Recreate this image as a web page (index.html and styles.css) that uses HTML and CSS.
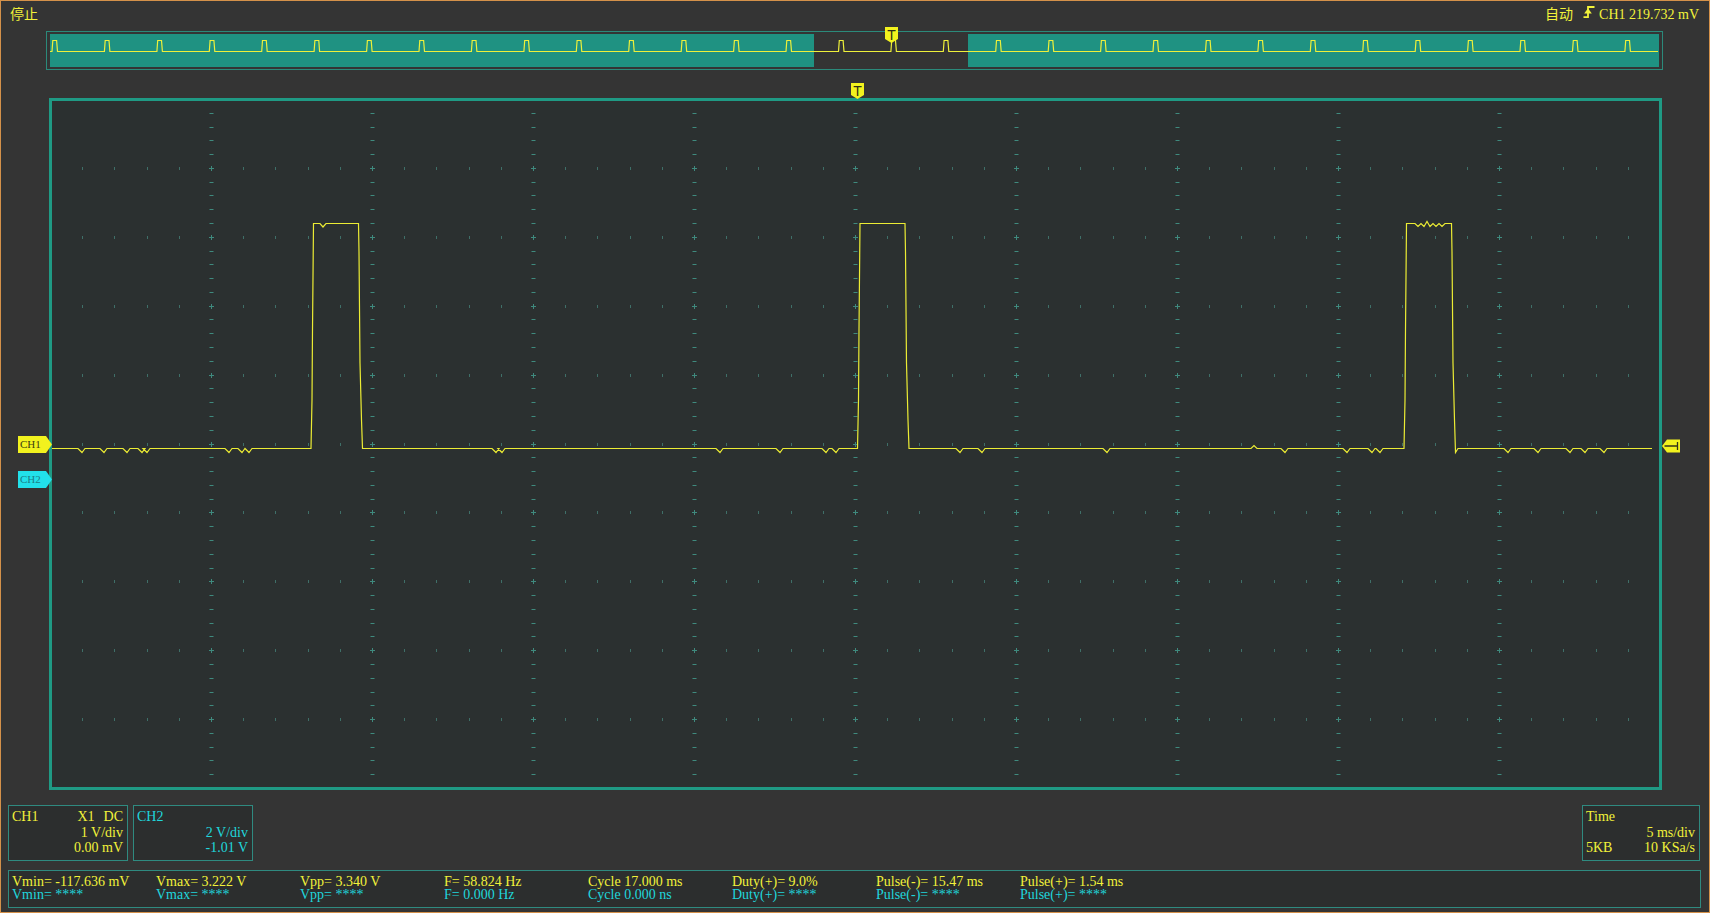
FILE: index.html
```html
<!DOCTYPE html>
<html lang="zh">
<head>
<meta charset="utf-8">
<title>Scope</title>
<link rel="stylesheet" href="styles.css">
</head>
<body>
<div class="screen">
  <header class="topbar">
    <span class="state">停止</span>
    <div class="trig">
      <span class="mode">自动</span>
      <svg class="edge" width="12" height="12" viewBox="0 0 12 12"><path d="M0.5 11.2H5V1H11.5" fill="none" stroke="#f2f23a" stroke-width="1.8"/><path d="M1.2 7.5L5 2.2L8.8 7.5Z" fill="#f2f23a"/></svg>
      <span class="trig-val">CH1 219.732 mV</span>
    </div>
  </header>

  <div class="overview">
    <div class="ov-inner">
      <svg class="ov-svg" width="1609" height="33" viewBox="50 34 1609 33">
        <rect x="814" y="34" width="154" height="33" fill="#343434"/>
        <path id="ov-trace" d="" fill="none" stroke="#eef03a" stroke-width="1.2"/>
      </svg>
    </div>
  </div>

  <div class="graticule">
    <svg class="scope-svg" width="1607" height="686" viewBox="52 101 1607 686">
      <path id="grid-h" d="" fill="none" stroke="#3f6f68" stroke-width="1"/>
      <path id="grid-v" d="" fill="none" stroke="#3f8a7e" stroke-width="1"/>
      <path id="trace" d="" fill="none" stroke="#ecec34" stroke-width="1.2" stroke-linejoin="miter"/>
    </svg>
  </div>

  <div class="chanrow">
    <div class="box ch1">
      <div class="row"><span>CH1</span><span class="cpl"><span>X1</span><span>DC</span></span></div>
      <div class="row end"><span>1 V/div</span></div>
      <div class="row end"><span>0.00 mV</span></div>
    </div>
    <div class="box ch2">
      <div class="row"><span>CH2</span></div>
      <div class="row end"><span>2 V/div</span></div>
      <div class="row end"><span>-1.01 V</span></div>
    </div>
    <div class="box time">
      <div class="row"><span>Time</span></div>
      <div class="row end"><span>5 ms/div</span></div>
      <div class="row"><span>5KB</span><span>10 KSa/s</span></div>
    </div>
  </div>

  <div class="measure">
    <div class="cell"><span class="y">Vmin= -117.636 mV</span><span class="c">Vmin= ****</span></div>
    <div class="cell"><span class="y">Vmax= 3.222 V</span><span class="c">Vmax= ****</span></div>
    <div class="cell"><span class="y">Vpp= 3.340 V</span><span class="c">Vpp= ****</span></div>
    <div class="cell"><span class="y">F= 58.824 Hz</span><span class="c">F= 0.000 Hz</span></div>
    <div class="cell"><span class="y">Cycle 17.000 ms</span><span class="c">Cycle 0.000 ns</span></div>
    <div class="cell"><span class="y">Duty(+)= 9.0%</span><span class="c">Duty(+)= ****</span></div>
    <div class="cell"><span class="y">Pulse(-)= 15.47 ms</span><span class="c">Pulse(-)= ****</span></div>
    <div class="cell"><span class="y">Pulse(+)= 1.54 ms</span><span class="c">Pulse(+)= ****</span></div>
  </div>

  <div class="tmark ov-t">T</div>
  <div class="tmark main-t">T</div>
  <div class="ch-marker ch1m">CH1</div>
  <div class="ch-marker ch2m">CH2</div>
  <svg class="lvl-marker" width="18" height="14" viewBox="0 0 18 14"><path d="M0 7L5 0.5H18V13.5H5Z" fill="#f2f21e"/><path d="M2.5 7H15.5M15.5 3V11" stroke="#33331a" stroke-width="1.3" fill="none"/></svg>
</div>
<script src="script.js"></script>
</body>
</html>
```
FILE: styles.css
```css
* { box-sizing: border-box; margin: 0; padding: 0; }
html, body { margin: 0; background: #343434; }
body { width: 1710px; height: 913px; overflow: hidden; }

.screen {
  position: relative;
  width: 1710px;
  height: 913px;
  border: 1px solid #d4914a;
  background: #343434;
  font-family: "Liberation Serif", "Times New Roman", serif;
  font-size: 14px;
  color: #f2f23a;
  display: flex;
  flex-direction: column;
  align-items: flex-start;
}
.screen > * { flex-shrink: 0; }

.topbar {
  width: 100%;
  height: 28px;
  display: flex;
  justify-content: space-between;
  align-items: baseline;
  padding: 2px 10px 0 9px;
  line-height: 20px;
}
.state, .mode { font-family: "Noto Sans CJK SC", sans-serif; font-size: 14px; }
.trig { display: flex; align-items: baseline; }
.edge { display: inline-block; margin: 0 4px 0 10px; position: relative; top: -1px; }

.overview {
  margin: 2px 0 0 45px;
  width: 1617px;
  height: 39px;
  border: 1px solid #2b8a7b;
  padding: 2px 3px;
}
.ov-inner { width: 100%; height: 100%; background: #1f9282; }
.ov-svg { display: block; }

.graticule {
  margin: 28px 0 0 48px;
  width: 1613px;
  height: 692px;
  border: 3px solid #1f9a84;
  background: #2b3030;
}
.scope-svg { display: block; }

.chanrow {
  width: 100%;
  height: 56px;
  margin-top: 15px;
  display: flex;
  gap: 5px;
  padding: 0 9px 0 7px;
}
.box {
  width: 120px;
  height: 56px;
  border: 1px solid #2f8a80;
  background: #2c2e2e;
  padding: 3px 4px 0 3px;
  line-height: 15.5px;
}
.box .row { display: flex; justify-content: space-between; white-space: nowrap; }
.box .row.end { justify-content: flex-end; }
.cpl { display: flex; gap: 9px; }
.ch2 { color: #20d6dc; }
.time { width: 118px; margin-left: auto; }

.measure {
  margin: 9px 0 0 7px;
  width: 1693px;
  height: 38px;
  border: 1px solid #2f8a80;
  background: #2c2e2e;
  padding: 4px 0 0 3px;
  display: grid;
  grid-template-columns: repeat(8, 144px);
  line-height: 13px;
}
.cell { display: flex; flex-direction: column; white-space: nowrap; }
.cell .c { color: #20d6dc; }

.tmark {
  position: absolute;
  width: 13px;
  height: 16px;
  background: #f2f21e;
  clip-path: polygon(0 0, 100% 0, 100% 75%, 50% 100%, 0 75%);
  font-family: "Liberation Sans", Arial, sans-serif;
  font-size: 14px;
  line-height: 16px;
  text-align: center;
  color: #2e2e14;
}
.ov-t { left: 884px; top: 26px; }
.main-t { left: 850px; top: 82px; }

.ch-marker {
  position: absolute;
  left: 17px;
  width: 34px;
  height: 17px;
  font-size: 11px;
  line-height: 17px;
  padding-left: 2px;
  clip-path: polygon(0 0, 28px 0, 34px 50%, 28px 100%, 0 100%);
}
.ch1m { top: 435px; background: #f2f21e; color: #3c3c12; }
.ch2m { top: 470px; background: #22e0ea; color: #1a7f88; }

.lvl-marker { position: absolute; left: 1661px; top: 438px; display: block; }
```
FILE: script.js
```js
(function () {
  // Overview trace
  var p = 'M50 51.5';
  for (var k = 0; k < 31; k++) {
    var x = 52 + 52.43 * k;
    p += ' L' + x.toFixed(1) + ' 51.5 L' + (x + 0.8).toFixed(1) + ' 40.5 L' + (x + 4.6).toFixed(1) + ' 40.5 L' + (x + 5.5).toFixed(1) + ' 51.5';
  }
  p += ' L1658 51.5';
  document.getElementById('ov-trace').setAttribute('d', p);

  // Graticule ticks
  var g = '';
  for (var kv = 1; kv <= 9; kv++) {
    var gx = 50.5 + 161 * kv;
    for (var j = 1; j < 50; j++) {
      var gy = Math.floor(99.5 + 13.78 * j) + 0.5;
      if (j % 5 === 0) {
        g += 'M' + (gx - 2.5) + ' ' + gy + 'h5M' + gx + ' ' + (gy - 2.5) + 'v5';
      } else {
        g += 'M' + (gx - 2) + ' ' + gy + 'h4';
      }
    }
  }
  document.getElementById('grid-v').setAttribute('d', g);
  var r = '';
  for (var m = 1; m <= 9; m++) {
    var ry = Math.floor(99.5 + 68.9 * m);
    for (var i = 1; i < 50; i++) {
      if (i % 5 === 0) continue;
      var rx = Math.floor(50.5 + 32.2 * i) + 0.5;
      r += 'M' + rx + ' ' + (ry - 1) + 'v3';
    }
  }
  document.getElementById('grid-h').setAttribute('d', r);

  // Main trace
  var B = 448.5, T = 223.5;
  var ev = [];
  var dips = [82, 104, 127, 142, 147, 229, 242, 249, 496, 502, 720, 780, 826, 836, 960, 982, 1107, 1285, 1347, 1372, 1380, 1508, 1538, 1570, 1585, 1604];
  dips.forEach(function (d) { ev.push({ x: d, pts: [[d - 4, B], [d, B + 4], [d + 3, B]] }); });
  [1254].forEach(function (d) { ev.push({ x: d, pts: [[d - 3, B], [d, B - 3], [d + 3, B]] }); });
  var pulses = [0, 546.5, 1093];
  pulses.forEach(function (o, idx) {
    var x0 = 311 + o;
    var pts = [[x0, B], [x0 + 1, 400], [x0 + 1.5, 330], [x0 + 2.5, T]];
    if (idx === 0) {
      pts.push([x0 + 9, T], [x0 + 12, T + 3.5], [x0 + 15, T]);
    } else if (idx === 2) {
      var zz = [[11, T], [14, T + 3], [17, T], [20, T + 3], [23, T - 2], [26, T + 3], [29, T], [32, T + 3], [35, T], [38, T + 3], [41, T]];
      zz.forEach(function (q) { pts.push([x0 + q[0], q[1]]); });
    }
    pts.push([x0 + 47.5, T], [x0 + 48, 252], [x0 + 49, 363], [x0 + 50.5, 420]);
    if (idx === 2) {
      pts.push([x0 + 51.5, B + 4], [x0 + 54, B]);
    } else {
      pts.push([x0 + 51.5, B]);
    }
    ev.push({ x: x0, pts: pts });
  });
  ev.sort(function (a, b) { return a.x - b.x; });
  var t = 'M52 ' + B;
  ev.forEach(function (e) {
    e.pts.forEach(function (q) { t += ' L' + q[0] + ' ' + q[1]; });
  });
  t += ' L1652 ' + B;
  document.getElementById('trace').setAttribute('d', t);
})();
```
